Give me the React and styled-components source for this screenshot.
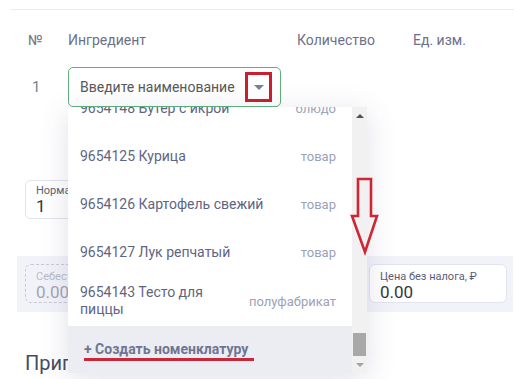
import React from 'react'
import styled, { createGlobalStyle } from 'styled-components'

const GlobalStyle = createGlobalStyle`
  body {
    margin: 0;
    background: #fff;
    font-family: Roboto, 'Liberation Sans', sans-serif;
  }
`

const items = [
  { code: '9654148', name: 'Бутер с икрой', kind: 'блюдо' },
  { code: '9654125', name: 'Курица', kind: 'товар' },
  { code: '9654126', name: 'Картофель свежий', kind: 'товар' },
  { code: '9654127', name: 'Лук репчатый', kind: 'товар' },
  { code: '9654143', name: 'Тесто для пиццы', kind: 'полуфабрикат' }
]

const App = () => (
  <Page>
    <GlobalStyle />
    <TopRule />
    <TableRow>
      <HeadCell>№</HeadCell>
      <HeadCell>Ингредиент</HeadCell>
      <HeadCell>Количество</HeadCell>
      <HeadCell>Ед. изм.</HeadCell>
    </TableRow>
    <ItemRow>
      <IndexCell>1</IndexCell>
      <SelectCell>
        <Select>
          <Placeholder>Введите наименование</Placeholder>
          <CaretButton $marked>
            <Caret />
          </CaretButton>
        </Select>
        <Dropdown>
          <ListColumn>
            <ListViewport>
              <ListScroll>
                {items.map(item => (
                  <Option key={item.code}>
                    <OptionName>{item.code} {item.name}</OptionName>
                    <OptionKind>{item.kind}</OptionKind>
                  </Option>
                ))}
              </ListScroll>
            </ListViewport>
            <CreateFooter>
              <CreateLink>+ Создать номенклатуру</CreateLink>
              <Underline />
            </CreateFooter>
          </ListColumn>
          <ScrollBar>
            <ScrollButton><ArrowUp /></ScrollButton>
            <ScrollTrack>
              <ScrollThumb />
            </ScrollTrack>
            <ScrollButton><ArrowDown /></ScrollButton>
          </ScrollBar>
        </Dropdown>
      </SelectCell>
    </ItemRow>
    <NormField>
      <FieldLabel>Норма</FieldLabel>
      <FieldValue>1</FieldValue>
    </NormField>
    <TotalsPanel>
      <Field $dashed>
        <FieldLabel $muted>Себестоимость, ₽</FieldLabel>
        <FieldValue $muted>0.00</FieldValue>
      </Field>
      <Field>
        <FieldLabel>Цена без налога, ₽</FieldLabel>
        <FieldValue>0.00</FieldValue>
      </Field>
    </TotalsPanel>
    <SectionTitle>Приготовление</SectionTitle>
    <DownArrow viewBox="0 0 36 80" width="36" height="80">
      <polygon
        points="12,2 25,2 25,39 31,39 19,75 6,39 12,39"
        fill="none"
        stroke="#cf2634"
        strokeWidth="2.6"
        strokeLinejoin="miter"
      />
    </DownArrow>
  </Page>
)

export default App

const Page = styled.div`
  position: relative;
  width: 514px;
  height: 379px;
  overflow: hidden;
  display: flex;
  flex-direction: column;
`

const TopRule = styled.div`
  margin: 9px 0 0 10px;
  border-top: 1px solid #ebebf0;
`

const TableRow = styled.div`
  display: grid;
  grid-template-columns: 40px 229px 116px auto;
  padding-left: 28px;
  margin-top: 20px;
`

const HeadCell = styled.div`
  font-size: 14px;
  line-height: 20px;
  color: #6c7089;
`

const ItemRow = styled.div`
  display: grid;
  grid-template-columns: 40px 213px;
  align-items: center;
  padding-left: 28px;
  margin-top: 17px;
  position: relative;
  z-index: 2;
`

const IndexCell = styled.div`
  padding-left: 4px;
  font-size: 15px;
  color: #797d93;
`

const SelectCell = styled.div`
  position: relative;
`

const Select = styled.div`
  height: 40px;
  box-sizing: border-box;
  border: 1px solid #5fb07c;
  border-radius: 5px;
  display: flex;
  align-items: center;
  padding: 0 8px 0 11px;
  background: #fff;
`

const Placeholder = styled.span`
  flex: 1;
  overflow: hidden;
  white-space: nowrap;
  font-size: 14px;
  color: #58585d;
  margin-right: 10px;
`

const CaretButton = styled.span`
  width: 27px;
  height: 30px;
  box-sizing: border-box;
  display: flex;
  align-items: center;
  justify-content: center;
  border: 3px solid ${p => (p.$marked ? '#c9202e' : 'transparent')};
`

const Caret = styled.span`
  width: 0;
  height: 0;
  border-left: 5px solid transparent;
  border-right: 5px solid transparent;
  border-top: 5px solid #7b8099;
`

const Dropdown = styled.div`
  position: absolute;
  top: 100%;
  left: 0;
  width: 299px;
  height: 266px;
  display: flex;
  background: #fff;
  box-shadow: 0 6px 28px rgba(60, 70, 120, 0.16);
`

const ListColumn = styled.div`
  flex: 1;
  display: flex;
  flex-direction: column;
  min-width: 0;
`

const ListViewport = styled.div`
  flex: 1;
  overflow: hidden;
`

const ListScroll = styled.div`
  margin-top: -23px;
`

const Option = styled.div`
  min-height: 48px;
  box-sizing: border-box;
  padding: 8px 16px 8px 12px;
  display: flex;
  align-items: center;
  justify-content: space-between;
  gap: 16px;
`

const OptionName = styled.span`
  flex: 1;
  font-size: 14px;
  line-height: 17px;
  color: #5e6583;
`

const OptionKind = styled.span`
  flex-shrink: 0;
  font-size: 13px;
  color: #9ca2b7;
`

const CreateFooter = styled.div`
  position: relative;
  height: 47px;
  display: flex;
  align-items: center;
  padding-left: 16px;
  background: #ecedf2;
`

const CreateLink = styled.span`
  font-size: 14px;
  font-weight: 700;
  color: #6e7693;
  margin-bottom: 2px;
`

const Underline = styled.div`
  position: absolute;
  left: 16px;
  top: 32px;
  width: 170px;
  height: 3px;
  background: #c9283a;
`

const ScrollBar = styled.div`
  width: 15px;
  display: flex;
  flex-direction: column;
  background: #f1f1f1;
`

const ScrollButton = styled.div`
  height: 17px;
  display: flex;
  align-items: center;
  justify-content: center;
`

const ArrowUp = styled.span`
  width: 0;
  height: 0;
  border-left: 4px solid transparent;
  border-right: 4px solid transparent;
  border-bottom: 4px solid #505050;
`

const ArrowDown = styled.span`
  width: 0;
  height: 0;
  border-left: 4px solid transparent;
  border-right: 4px solid transparent;
  border-top: 4px solid #a3a3a3;
`

const ScrollTrack = styled.div`
  flex: 1;
  display: flex;
  flex-direction: column;
  justify-content: flex-end;
`

const ScrollThumb = styled.div`
  height: 23px;
  margin: 0 1px;
  background: #a8a8a8;
`

const NormField = styled.div`
  margin: 73px 0 0 25px;
  width: 150px;
  height: 39px;
  box-sizing: border-box;
  border: 1px solid #e1e3ec;
  border-radius: 5px;
  padding: 3px 10px 0;
`

const FieldLabel = styled.div`
  font-size: 11px;
  line-height: 13px;
  white-space: nowrap;
  color: ${p => (p.$muted ? '#b9bbc6' : '#5a6074')};
`

const FieldValue = styled.div`
  font-size: 17px;
  line-height: 19px;
  color: ${p => (p.$muted ? '#a3a6b2' : '#33363f')};
`

const TotalsPanel = styled.div`
  margin: 37px 1px 0 17px;
  height: 56px;
  box-sizing: border-box;
  padding: 8px 6px 9px 8px;
  background: #f2f3f9;
  display: flex;
  justify-content: space-between;
`

const Field = styled.div`
  width: 138px;
  box-sizing: border-box;
  border-radius: 6px;
  padding: 5px 10px 0;
  background: ${p => (p.$dashed ? 'transparent' : '#fff')};
  border: 1px ${p => (p.$dashed ? 'dashed #c7c9d3' : 'solid #e2e4ed')};
`

const SectionTitle = styled.h2`
  margin: 39px 0 0 25px;
  font-size: 20px;
  line-height: 24px;
  font-weight: 400;
  color: #464b5f;
`

const DownArrow = styled.svg`
  position: absolute;
  left: 346px;
  top: 177px;
  z-index: 3;
`
